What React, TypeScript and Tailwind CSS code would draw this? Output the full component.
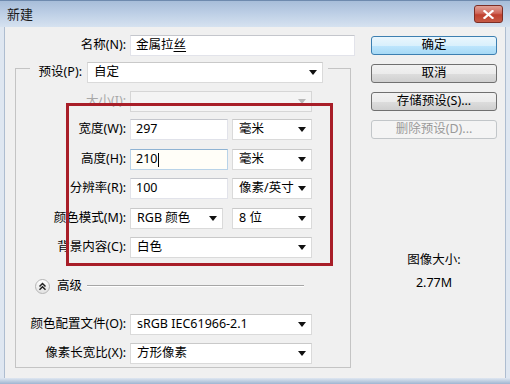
import React from "react";

const Arrow = ({ faded }: { faded?: boolean }) => (
  <svg width="8" height="5" viewBox="0 0 8 5" className="shrink-0">
    <path d="M0 0 H8 L4 5 Z" fill={faded ? "#b8b8b8" : "#111"} />
  </svg>
);

function Select({ className, text, disabled }: { className: string; text?: string; disabled?: boolean }) {
  return (
    <div
      className={`h-[21px] flex items-center justify-between pl-[6px] pr-[5px] border ${
        disabled ? "bg-[#f4f4f4] border-[#d6d6d6]" : "bg-white border-[#dadada] border-t-[#c9c9c9]"
      } ${className}`}
    >
      <span className="text-[12.5px] leading-none text-black whitespace-nowrap">{text}</span>
      <Arrow faded={disabled} />
    </div>
  );
}

function Input({ className, children, focus }: { className: string; children: React.ReactNode; focus?: boolean }) {
  return (
    <div
      className={`h-[21px] flex items-center pl-[5px] border ${
        focus ? "bg-[#fffef8] border-[#b9d3e8] border-t-[#8fb3d3]" : "bg-white border-[#e2e3ea] border-t-[#c4c6cc]"
      } ${className}`}
    >
      <span className="text-[12.5px] leading-none text-black whitespace-nowrap flex items-center">{children}</span>
    </div>
  );
}

function Button({ text, def, disabled }: { text: string; def?: boolean; disabled?: boolean }) {
  let cls = "border-[#707070] bg-[linear-gradient(#f2f2f2_0%,#ebebeb_50%,#dddddd_51%,#cfcfcf_100%)] text-black";
  if (def) cls = "border-[#3c7fb1] bg-[linear-gradient(#eaf6fd_0%,#d9f0fc_50%,#bee6fd_51%,#a7d9f5_100%)] text-black";
  if (disabled) cls = "border-[#c2c6c9] bg-[#f4f4f4] text-[#9a9a9a]";
  return (
    <div className={`h-[19px] w-[126px] rounded-[3px] border flex items-center justify-center text-[12.5px] leading-none ${cls}`}>
      {text}
    </div>
  );
}

function Label({ className, text, disabled }: { className: string; text: string; disabled?: boolean }) {
  return (
    <div className={`shrink-0 text-right text-[12.5px] leading-none whitespace-nowrap pr-[4px] ${disabled ? "text-[#a8a8a8]" : "text-black"} ${className}`}>
      {text}
    </div>
  );
}

export default function App() {
  return (
    <div className="relative w-[510px] h-[384px] flex flex-col overflow-hidden font-['Noto_Sans','Noto_Sans_CJK_SC',sans-serif] bg-[#d7e2ef]">
      {/* title bar */}
      <div className="h-[27px] shrink-0 flex items-center justify-between pl-[7px] pr-[7px] bg-[linear-gradient(#a7bdd9_0%,#bccee5_45%,#d6e2f0_100%)] border-t border-[#6e8aae]">
        <span className="text-[13px] text-[#1a1a1a] leading-none">新建</span>
        <div className="w-[29px] h-[18px] rounded-[3px] border border-[#7b2e26] bg-[linear-gradient(#e0a197_0%,#d0685b_45%,#c0402f_55%,#c65a45_100%)] flex items-center justify-center">
          <svg width="11" height="9" viewBox="0 0 11 9">
            <path d="M1.5 1 L9.5 8 M9.5 1 L1.5 8" stroke="#fff" strokeWidth="2.2" strokeLinecap="square" />
          </svg>
        </div>
      </div>

      <div className="flex flex-1 min-h-0">
        <div className="w-[5px] shrink-0 bg-[#dfe7f1] border-r border-[#aebdd0]" />
        {/* client */}
        <div className="flex-1 bg-[#f0f0f0] flex">
          {/* left column */}
          <div className="w-[350px] shrink-0 flex flex-col">
            <div className="mt-[8px] flex items-center h-[21px]">
              <Label className="w-[125px]" text="名称(N):" />
              <Input className="w-[225px]">
                金属拉<span className="underline decoration-1 underline-offset-2">丝</span>
              </Input>
            </div>

            {/* group box */}
            <div className="mt-[12px] ml-[10px] w-[336px] h-[300px] border border-[#c4c4c4] flex flex-col">
              <div className="-mt-[7px] ml-[14px] w-[298px] h-[21px] flex items-center bg-[#f0f0f0]">
                <Label className="w-[56px]" text="预设(P):" />
                <Select className="ml-[1px] w-[236px]" text="自定" />
              </div>

              <div className="mt-[8px] flex items-center h-[21px]">
                <Label className="w-[114px]" text="大小(I):" disabled />
                <Select className="w-[182px]" disabled />
              </div>

              <div className="mt-[7px] flex items-center h-[21px]">
                <Label className="w-[114px]" text="宽度(W):" />
                <Input className="w-[98px]">297</Input>
                <Select className="ml-[4px] w-[80px]" text="毫米" />
              </div>
              <div className="mt-[9px] flex items-center h-[21px]">
                <Label className="w-[114px]" text="高度(H):" />
                <Input className="w-[98px]" focus>
                  210<span className="w-[1px] h-[14px] bg-black ml-[1px] inline-block" />
                </Input>
                <Select className="ml-[4px] w-[80px]" text="毫米" />
              </div>
              <div className="mt-[8px] flex items-center h-[21px]">
                <Label className="w-[114px]" text="分辨率(R):" />
                <Input className="w-[98px]">100</Input>
                <Select className="ml-[4px] w-[80px]" text="像素/英寸" />
              </div>
              <div className="mt-[9px] flex items-center h-[21px]">
                <Label className="w-[114px]" text="颜色模式(M):" />
                <Select className="w-[93px]" text="RGB 颜色" />
                <Select className="ml-[9px] w-[80px]" text="8 位" />
              </div>
              <div className="mt-[8px] flex items-center h-[21px]">
                <Label className="w-[114px]" text="背景内容(C):" />
                <Select className="w-[182px]" text="白色" />
              </div>

              {/* advanced */}
              <div className="mt-[20px] ml-[19px] flex items-center h-[16px]">
                <div className="w-[15px] h-[15px] rounded-full border border-[#b5b5b5] bg-[linear-gradient(#ffffff,#e2e2e2)] flex items-center justify-center">
                  <svg width="9" height="9" viewBox="0 0 9 9">
                    <path d="M1.5 4.5 L4.5 1.5 L7.5 4.5 M1.5 7.8 L4.5 4.8 L7.5 7.8" stroke="#222" strokeWidth="1.5" fill="none" />
                  </svg>
                </div>
                <span className="ml-[7px] text-[12.5px] leading-none text-black">高级</span>
                <div className="ml-[5px] w-[217px] h-[2px] border-t border-[#a6a6a6] border-b border-b-white" />
              </div>

              <div className="mt-[20px] flex items-center h-[21px]">
                <Label className="w-[114px]" text="颜色配置文件(O):" />
                <Select className="w-[182px]" text="sRGB IEC61966-2.1" />
              </div>
              <div className="mt-[8px] flex items-center h-[21px]">
                <Label className="w-[114px]" text="像素长宽比(X):" />
                <Select className="w-[182px]" text="方形像素" />
              </div>
            </div>
          </div>

          {/* right column */}
          <div className="ml-[16px] flex flex-col items-center w-[126px]">
            <div className="mt-[9px] flex flex-col gap-[9px]">
              <Button text="确定" def />
              <Button text="取消" />
              <Button text="存储预设(S)..." />
              <Button text="删除预设(D)..." disabled />
            </div>
            <div className="mt-[114px] text-[12.5px] leading-[14px] text-black">图像大小:</div>
            <div className="mt-[9px] text-[12.5px] leading-[14px] text-black">2.77M</div>
          </div>
        </div>
        <div className="w-[5px] shrink-0 bg-[#dfe7f1] border-l border-[#aebdd0]" />
      </div>
      <div className="h-[6px] shrink-0 bg-[linear-gradient(#dfe7f1,#9fb5d1)]" />

      {/* red annotation box */}
      <div className="absolute left-[66px] top-[103px] w-[267px] h-[163px] border-[3px] border-[#a81e28]" />
    </div>
  );
}
